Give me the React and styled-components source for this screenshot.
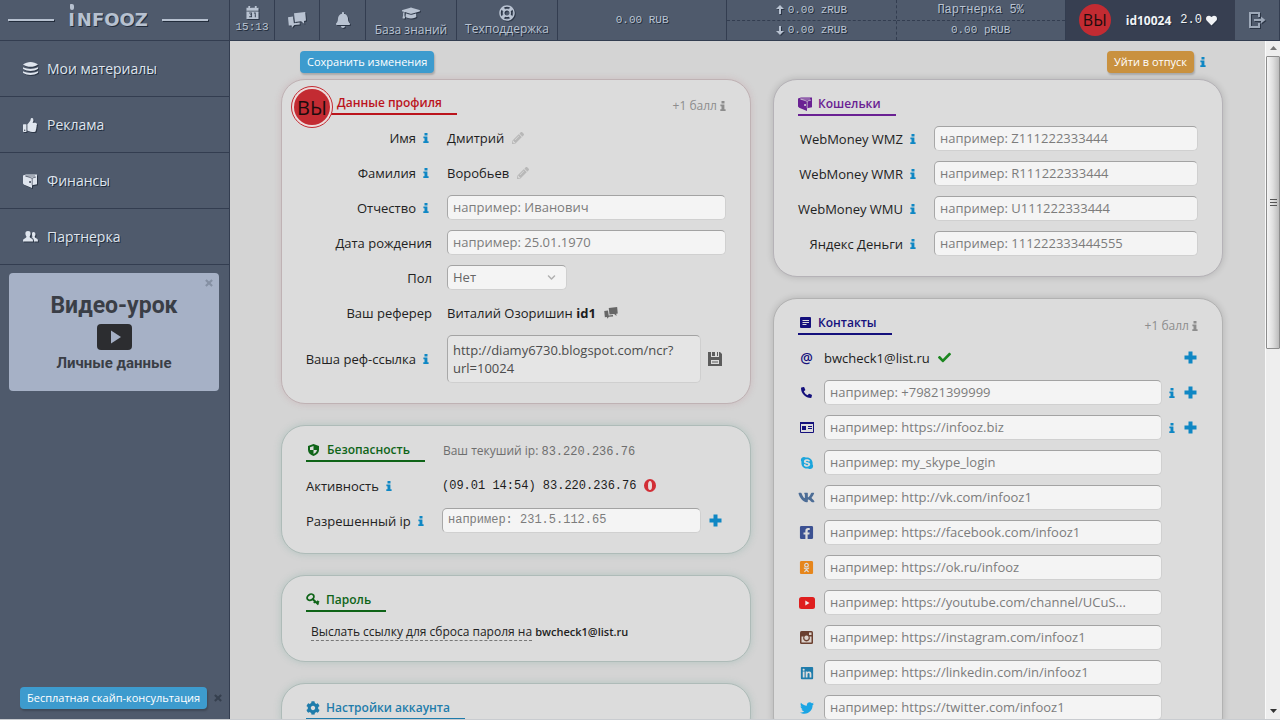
import React from 'react';
import styled, { createGlobalStyle } from 'styled-components';
import {
  FaThumbsUp, FaBell, FaGraduationCap, FaRegLifeRing, FaHeart, FaCheck,
  FaCog, FaVk, FaFacebookSquare, FaOdnoklassnikiSquare, FaLinkedin, FaTwitter,
  FaPhoneAlt, FaChevronDown, FaPencilAlt, FaSkype,
} from 'react-icons/fa';

const sans = '"Open Sans", "Noto Sans", sans-serif';
const mono = '"Liberation Mono", monospace';

const GlobalStyle = createGlobalStyle`
  * {
    box-sizing: border-box;
  }

  body {
    margin: 0;
    background: #d4d4d4;
    color: #1c1c1c;
    font-family: ${sans};
    font-size: 13px;
  }

  button, input, select, textarea {
    font: inherit;
    margin: 0;
  }

  svg {
    display: block;
    flex: none;
  }
`;

const Page = styled.div`
  display: flex;
  flex-direction: column;
  height: 100vh;
  overflow: hidden;
  border-bottom: 1px solid #c9ccd0;
`;

const Header = styled.header`
  display: flex;
  height: 41px;
  flex: none;
  background: #4f5a6c;
  border-bottom: 1px solid #333d50;
  color: #b9c3d2;
  text-shadow: 1px 1px 0 #222c3b;

  svg {
    filter: drop-shadow(1px 1px 0 #2b3545);
  }
`;

const Logo = styled.a`
  display: flex;
  align-items: center;
  justify-content: space-between;
  width: 230px;
  flex: none;
  padding: 0 21px 0 8px;
  border-right: 1px solid #333d50;
  color: #b7c1d0;
  font: bold 18px/24px "DejaVu Sans", sans-serif;
  text-decoration: none;
`;

const LogoLine = styled.span`
  width: 46px;
  height: 2px;
  background: #b7c1d0;
  box-shadow: 1px 1px 0 #222c3b;
`;

const LogoName = styled.span`
  display: flex;
  gap: 2px;
`;

const LogoLetter = styled.span`
  position: relative;

  &::before {
    content: '';
    position: absolute;
    left: 2px;
    top: -4px;
    width: 4px;
    height: 6px;
    border-radius: 1px 3px 3px 3px;
    background: #b7c1d0;
  }
`;

const HeaderButton = styled.button`
  display: flex;
  flex-direction: column;
  align-items: center;
  justify-content: center;
  gap: ${p => p.$gap || 0}px;
  width: ${p => p.$width}px;
  flex: none;
  padding: 0;
  border: 0;
  border-right: 1px solid #333d50;
  background: none;
  color: inherit;
  text-shadow: inherit;
  font-size: 12px;
  line-height: 14px;
  white-space: nowrap;
`;

const MonoText = styled.span`
  font-family: ${mono};
  font-size: ${p => p.$size || 12}px;
`;

const Balances = styled.div`
  display: grid;
  grid-template-columns: repeat(4, minmax(0, 1fr));
  flex: 1;
`;

const Balance = styled.div`
  display: flex;
  flex-direction: column;
  border-right: 1px ${p => (p.$dashed ? 'dashed' : 'solid')} #333d50;
  font: 11px/18px ${mono};
`;

const BalanceLine = styled.div`
  display: flex;
  flex: 1;
  align-items: center;
  justify-content: center;
  gap: 4px;

  & + & {
    border-top: 1px dashed #333d50;
  }
`;

const UserCell = styled.div`
  display: flex;
  align-items: center;
  gap: 15px;
  padding-left: 13px;
  background: #373f51;
  color: #f1f3f6;
  font-size: 12px;
  font-weight: 700;
  white-space: nowrap;
`;

const Score = styled.span`
  display: flex;
  align-items: center;
  gap: 4px;
  margin-left: -6px;
  font: 12px/18px ${mono};
`;

const Avatar = styled.span`
  display: flex;
  align-items: center;
  justify-content: center;
  width: ${p => p.$size}px;
  height: ${p => p.$size}px;
  border-radius: 50%;
  background: #c32b32;
  color: #1c0c0d;
  font-size: ${p => p.$font}px;
  font-weight: 400;
  text-shadow: none;
`;

const Body = styled.div`
  display: flex;
  flex: 1;
  min-height: 0;
`;

const Sidebar = styled.aside`
  display: flex;
  flex-direction: column;
  width: 230px;
  flex: none;
  background: #4f5a6c;
  border-right: 1px solid #333d50;
`;

const MenuLink = styled.a`
  display: grid;
  grid-template-columns: 15px 1fr;
  align-items: center;
  gap: 9px;
  height: 56px;
  padding: 0 23px;
  border-bottom: 1px solid #333d50;
  color: #dfe5ee;
  font-size: 14px;
  text-decoration: none;
  text-shadow: 1px 1px 0 #222c3b;

  svg {
    filter: drop-shadow(1px 1px 0 #2b3545);
  }
`;

const Promo = styled.section`
  position: relative;
  display: flex;
  flex-direction: column;
  align-items: center;
  margin: 8px 10px 0 9px;
  padding: 18px 0 19px;
  border-radius: 4px;
  background: #a6b1c6;
  color: #3a3e46;
  font-family: Roboto, sans-serif;
  font-weight: 700;
`;

const PromoTitle = styled.h2`
  margin: 0 0 4px;
  font-size: 23px;
  line-height: 29px;
`;

const PromoText = styled.p`
  margin: 4px 0 0;
  font-size: 15px;
  line-height: 18px;
`;

const CloseButton = styled.button`
  padding: 0;
  border: 0;
  background: none;
  color: inherit;
`;

const PromoClose = styled(CloseButton)`
  position: absolute;
  top: 6px;
  right: 6px;
  color: #8590a3;
`;

const Consult = styled.div`
  display: flex;
  align-items: center;
  gap: 7px;
  margin: auto 0 10px 20px;
  color: #36404f;
`;

const ActionButton = styled.button`
  height: 22px;
  padding: 0 7px;
  border: 0;
  border-radius: 4px;
  background: ${p => p.$color};
  box-shadow: 1px 2px 2px rgba(0, 0, 0, 0.2);
  color: #fff;
  font-size: 11px;
  font-weight: 500;
  line-height: 20px;
  white-space: nowrap;
`;

const Main = styled.main`
  flex: 1;
  min-width: 0;
  overflow: hidden;
  padding: 10px 42px 0 51px;
`;

const Toolbar = styled.div`
  display: flex;
  align-items: center;
  justify-content: space-between;
  height: 22px;
  margin-bottom: 6px;
  padding: 0 17px 0 19px;
`;

const Inline = styled.span`
  display: flex;
  align-items: center;
  gap: ${p => p.$gap || 8}px;
`;

const Columns = styled.div`
  display: grid;
  grid-template-columns: 47fr 45fr;
  gap: 22px;
  align-items: start;
`;

const Column = styled.div`
  display: flex;
  flex-direction: column;
  gap: 21px;
  min-width: 0;
`;

const Card = styled.section`
  position: relative;
  padding: ${p => p.$top || 13}px 24px 15px;
  border: 1px solid ${p => p.$edge};
  border-radius: 24px;
  background: #dcdcdc;
  box-shadow: 0 0 6px 1px ${p => p.$glow};
`;

const CardHead = styled.div`
  display: flex;
  align-items: flex-start;
  height: 28px;
  margin-bottom: ${p => p.$space || 0}px;
`;

const CardTitle = styled.h3`
  display: flex;
  align-items: center;
  gap: 6px;
  height: 23px;
  margin: 0 0 0 ${p => p.$shift || 0}px;
  padding: 0 15px 0 ${p => (p.$shift ? 6 : 0)}px;
  border-bottom: 2px solid ${p => p.$color};
  color: ${p => p.$color};
  font-size: 12px;
  font-weight: 600;
  white-space: nowrap;
`;

const Bonus = styled.span`
  display: flex;
  align-items: center;
  gap: 3px;
  margin-left: auto;
  padding-top: 5px;
  color: #8d8d8d;
  font-size: 12px;
`;

const AvatarRing = styled.button`
  position: absolute;
  left: 9px;
  top: 6px;
  padding: 2px;
  border: 1px solid #c32b32;
  border-radius: 50%;
  background: #ecdcdc;
`;

const Row = styled.div`
  display: grid;
  grid-template-columns: ${p => p.$columns};
  align-items: center;
  min-height: ${p => p.$height || 35}px;
`;

const Label = styled.label`
  display: flex;
  align-items: center;
  justify-content: ${p => (p.$left ? 'flex-start' : 'flex-end')};
  gap: 7px;
  color: #222;
  white-space: nowrap;

  svg {
    margin-right: ${p => p.$tail || 0}px;
  }
`;

const Value = styled.div`
  display: flex;
  align-items: center;
  gap: ${p => p.$gap || 8}px;
  min-width: 0;
  padding-left: ${p => p.$indent || 15}px;
`;

const Input = styled.input`
  width: 100%;
  min-width: 0;
  height: 25px;
  padding: 0 5px 1px;
  border: 1px solid #d0d0d0;
  border-top-color: #a3a3a3;
  border-left-color: #a8a8a8;
  border-radius: 5px;
  background: #f4f4f4;
  font-family: ${p => (p.$mono ? mono : sans)};
  font-size: ${p => (p.$mono ? 12 : 13)}px;
  color: #555;
  text-overflow: ellipsis;

  &::placeholder {
    color: #7c7c7c;
    opacity: 1;
  }
`;

const RefLink = styled.textarea`
  display: block;
  width: 100%;
  height: 48px;
  padding: 5px;
  border: 1px solid #cfcfcf;
  border-top-color: #a3a3a3;
  border-left-color: #a8a8a8;
  border-radius: 5px;
  background: #e5e5e5;
  color: #4c4c4c;
  line-height: 18px;
  resize: none;
  overflow: hidden;
`;

const SelectBox = styled.span`
  position: relative;
  width: 120px;

  svg {
    position: absolute;
    right: 11px;
    top: 8px;
    color: #b0b0b0;
    pointer-events: none;
  }
`;

const Select = styled.select`
  display: block;
  width: 100%;
  height: 25px;
  padding: 0 5px 1px;
  border: 1px solid #d0d0d0;
  border-top-color: #a3a3a3;
  border-left-color: #a8a8a8;
  border-radius: 5px;
  background: #f4f4f4;
  color: #666;
  appearance: none;
`;

const IconButton = styled.button`
  display: flex;
  padding: 0;
  border: 0;
  background: none;
  color: ${p => p.$color || '#0f87c4'};
`;

const PlusCell = styled.span`
  display: flex;
  align-items: center;
  justify-content: flex-end;
  gap: 9px;
  padding-right: ${p => p.$tail || 1}px;
`;

const IpNote = styled.span`
  margin-left: 18px;
  padding-top: 3px;
  color: #6e6e6e;
  font-size: 12px;
  white-space: nowrap;
`;

const ResetLine = styled.p`
  margin: 0 5px 5px;
  color: #222;
  font-size: 12px;
  line-height: 18px;

  a {
    border-bottom: 1px dashed #777;
    color: inherit;
    text-decoration: none;
  }

  b {
    font-size: 11px;
    font-weight: 600;
  }
`;

const AtIcon = styled.span`
  font-size: 14px;
  font-weight: 600;
  line-height: 16px;
`;

const SocialIcon = styled.span`
  display: flex;
  align-items: center;
  justify-content: center;
  width: 17px;
  color: ${p => p.$color};
`;

const ScrollTrack = styled.div`
  display: flex;
  flex-direction: column;
  align-items: center;
  width: 15px;
  flex: none;
  border-left: 1px solid #fafafa;
  background: #eee;
`;

const ScrollArrow = styled.svg.attrs({ width: 7, height: 4, viewBox: '0 0 7 4' })`
  margin: 5px 0 6px;
`;

const ScrollThumb = styled.div`
  display: flex;
  align-items: center;
  justify-content: center;
  width: 14px;
  height: 293px;
  border: 1px solid #8d8d8d;
  border-radius: 1px;
  background: linear-gradient(90deg, #f5f5f5, #dedede 50%, #bcbcbc);
`;

const ScrollEnd = styled.div`
  margin-top: auto;
`;

const InfoIcon = ({ color = '#0f87c4' }) => (
  <svg width="6" height="10" viewBox="0 0 6 10" fill={color}>
    <path d="M1.5 0h3v2.4h-3zM.4 3.5h4v4.8h1.2V10H.3V8.3h1.2V5.2H.4z" />
  </svg>
);

const CrossIcon = () => (
  <svg width="8" height="8" viewBox="0 0 9 9" stroke="currentColor" strokeWidth="2.4">
    <path d="M1 1l7 7M8 1 1 8" />
  </svg>
);

const CalendarIcon = () => (
  <svg width="13" height="13" viewBox="0 0 13 14" fill="currentColor">
    <path fillRule="evenodd" d="M0 2h2V0h2v2h5V0h2v2h2v3H0zM0 6h13v8H0zM3 7v1h2v1H4v1h1v1H3v1h3V7zm5 0v1h1v4h1V7z" />
  </svg>
);

const ChatIcon = ({ width = 18, height = 16 }) => (
  <svg width={width} height={height} viewBox="0 0 18 16" fill="currentColor">
    <path d="M6 1.2 17.2 0 18 8.6l-2 .3.3 3-3.2-2.6L7 10z" />
    <path d="M0 5.2 5 4.6l.9 6.6 5.7-.6.2 1.9-5.5.6-2.4 2.7-.2-2.4-2.9.2z" />
  </svg>
);

const StackIcon = () => (
  <svg width="15" height="13" viewBox="0 0 15 13" fill="currentColor">
    <path d="M0 2.5C2 1 5 0 7.5 0S13 1 15 2.5C13 4 10 4.8 7.5 4.8S2 4 0 2.5z" />
    <path d="M0 5.3c2.5 1.3 5 1.7 7.5 1.7s5-.4 7.5-1.7v1.4C13 8.2 10 8.900 7.500 8.900S2 8.200 0 6.700z" />
    <path d="M0 9.300C2.500 10.600 5 11 7.500 11s5-.4 7.500-1.700v1.400c-2 1.500-5 2.200-7.500 2.200S2 12.200 0 10.700z" />
  </svg>
);

const WalletIcon = ({ size = 14, slot = '#3b4355' }) => (
  <svg width={size} height={size} viewBox="0 0 14 14" fill="currentColor">
    <path d="M0 1.500 3 .5H14v9.700L9 11.200V14L1.200 10.800 0 9.500z" />
    <path d="M2.500 2h9.500M9.300 4 13 3M9.200 4v7.200M2.500 2 9 4.200" stroke={slot} strokeWidth=".7" fill="none" />
    <path d="M6.300 7h1.500v2H6.300z" fill={slot} />
  </svg>
);

const UsersIcon = () => (
  <svg width="15" height="11" viewBox="0 0 15 11" fill="currentColor">
    <path d="M5 0c2 0 2.800 1.300 2.600 3-.1 1.300-.7 2-.9 2.600 0 1 .4 1.300 1.700 1.800C10 8 10 9 10 10.500H0C0 8.700.2 8 1.800 7.400c1.200-.5 1.600-.8 1.600-1.800-.3-.6-.9-1.300-1-2.600C2.200 1.300 3 0 5 0z" />
    <path d="M10.300 1c1.600 0 2.300 1 2.200 2.400-.1 1-.5 1.700-.8 2.200 0 .9.300 1.200 1.400 1.700 1.500.6 1.900 1.300 1.900 3.200h-4c0-2-.2-3-1.800-3.800-.2-.2.200-.6.200-1.100-.4-1.500-.9-4.600.9-4.600z" />
  </svg>
);

const ArrowIcon = ({ down }) => (
  <svg width="8" height="9" viewBox="0 0 8 9" fill="currentColor">
    <path d={down ? 'M3 0h2v5h3L4 9 0 5h3z' : 'M3 9h2V4h3L4 0 0 4h3z'} />
  </svg>
);

const ExitIcon = () => (
  <svg width="17" height="16" viewBox="0 0 17 16" fill="none" stroke="#9da8b8" strokeWidth="2">
    <path d="M10 5V1H1v14h9v-4" />
    <path d="M5 8h8" />
    <path d="M12 4.500 16.500 8 12 11.500z" fill="#9da8b8" stroke="none" />
  </svg>
);

const PlayIcon = () => (
  <svg width="35" height="26" viewBox="0 0 35 26">
    <rect width="35" height="26" rx="4" fill="#2c2d30" />
    <path d="M14 6.500v13L24 13z" fill="#a6b1c6" />
  </svg>
);

const PlusIcon = () => (
  <svg width="13" height="13" viewBox="0 0 13 13" fill="currentColor">
    <path d="M4.500.5h4v4h4v4h-4v4h-4v-4h-4v-4h4z" />
  </svg>
);

const FloppyIcon = () => (
  <svg width="14" height="14" viewBox="0 0 14 14" fill="currentColor">
    <path fillRule="evenodd" d="M0 0h3v5h8V0h1l2 2v12H0zM4 0h3v4H4zM9 0h1v4H9zM3 8v4h8V8z" />
    <path d="M4 9.500h6v1H4z" />
  </svg>
);

const ShieldIcon = () => (
  <svg width="15" height="12" viewBox="-2 0 15 12">
    <path d="M5.500 0 11 2v4c0 3-2.500 5-5.500 6C2.500 11 0 9 0 6V2z" fill="currentColor" />
    <path d="M5.500 2v4H9c-.3 2-1.700 3.300-3.500 4V6H2V3.300z" fill="#dcdcdc" />
  </svg>
);

const KeyIcon = () => (
  <svg width="14" height="13" viewBox="0 0 14 13" fill="none" stroke="currentColor">
    <ellipse cx="4.500" cy="4.200" rx="3.600" ry="2.800" strokeWidth="1.800" transform="rotate(-35 4.500 4.200)" />
    <path d="M6.500 6 12.500 11.500M9 8.500 8 10M11 8l2 1.500" strokeWidth="2" />
  </svg>
);

const ListIcon = () => (
  <svg width="14" height="11" viewBox="-2 0 14 11">
    <rect width="11" height="11" rx="1" fill="currentColor" />
    <path d="M2.500 3.500h6.500M2.500 5.500h6.500M2.500 7.500h4" stroke="#dcdcdc" />
  </svg>
);

const CardIcon = () => (
  <svg width="14" height="11" viewBox="0 0 14 11" fill="none" stroke="currentColor">
    <path d="M.5.5h13v10H.5z" />
    <path d="M0 1h14" strokeWidth="2" />
    <path d="M2 4h4v4H2z" fill="currentColor" stroke="none" />
    <path d="M8 4.500h4M8 6.500h4" />
  </svg>
);

const YoutubeIcon = () => (
  <svg width="16" height="12" viewBox="0 0 16 12">
    <rect width="16" height="12" rx="2.500" fill="#df1f1f" />
    <path d="M6.300 3.500v5L10.500 6z" fill="#f3eaea" />
  </svg>
);

const InstagramIcon = () => (
  <svg width="13" height="13" viewBox="0 0 13 13">
    <rect width="13" height="13" rx="1.500" fill="#6b4030" />
    <path d="M1.500 5.500h2a3.400 3.400 0 1 0 6 0h2v6h-10z" fill="#dcd2cb" />
    <circle cx="6.500" cy="6.700" r="2.200" fill="#dcd2cb" />
    <path d="M9 1.500h2.500V4H9z" fill="#dcd2cb" />
  </svg>
);

const OperaIcon = () => (
  <svg width="12" height="13" viewBox="0 0 12 13">
    <ellipse cx="6" cy="6.500" rx="6" ry="6.500" fill="#d22e36" />
    <ellipse cx="6" cy="6.500" rx="2" ry="4.600" fill="#ead9da" />
  </svg>
);

const menu = [
  { icon: <StackIcon />, label: 'Мои материалы' },
  { icon: <FaThumbsUp size={14} />, label: 'Реклама' },
  { icon: <WalletIcon />, label: 'Финансы' },
  { icon: <UsersIcon />, label: 'Партнерка' },
];

const wallets = [
  { id: 'wmz', label: 'WebMoney WMZ', hint: 'например: Z111222333444' },
  { id: 'wmr', label: 'WebMoney WMR', hint: 'например: R111222333444' },
  { id: 'wmu', label: 'WebMoney WMU', hint: 'например: U111222333444' },
  { id: 'yandex', label: 'Яндекс Деньги', hint: 'например: 111222333444555' },
];

const navy = '#14107c';

const contacts = [
  { id: 'phone', icon: <FaPhoneAlt size={11} />, color: navy, hint: 'например: +79821399999', extra: true },
  { id: 'site', icon: <CardIcon />, color: navy, hint: 'например: https://infooz.biz', extra: true },
  { id: 'skype', icon: <FaSkype size={14} />, color: '#1ba5dc', hint: 'например: my_skype_login' },
  { id: 'vk', icon: <FaVk size={17} />, color: '#4d6d96', hint: 'например: http://vk.com/infooz1' },
  { id: 'facebook', icon: <FaFacebookSquare size={15} />, color: '#3c5192', hint: 'например: https://facebook.com/infooz1' },
  { id: 'ok', icon: <FaOdnoklassnikiSquare size={15} />, color: '#e6861c', hint: 'например: https://ok.ru/infooz' },
  { id: 'youtube', icon: <YoutubeIcon />, color: '#df1f1f', hint: 'например: https://youtube.com/channel/UCuS...' },
  { id: 'instagram', icon: <InstagramIcon />, color: '#6b4030', hint: 'например: https://instagram.com/infooz1' },
  { id: 'linkedin', icon: <FaLinkedin size={14} />, color: '#1f7cab', hint: 'например: https://linkedin.com/in/infooz1' },
  { id: 'twitter', icon: <FaTwitter size={14} />, color: '#1ba5e4', hint: 'например: https://twitter.com/infooz1' },
];

const profileColumns = '126px minmax(0, 1fr)';
const contactColumns = '26px minmax(0, 1fr) 36px';

const TopBar = () => (
  <Header>
    <Logo href="#">
      <LogoLine />
      <LogoName>
        <LogoLetter>I</LogoLetter>
        <span>NFOOZ</span>
      </LogoName>
      <LogoLine />
    </Logo>
    <HeaderButton $width={45} $gap={1}>
      <CalendarIcon />
      <MonoText $size={11}>15:13</MonoText>
    </HeaderButton>
    <HeaderButton $width={45} aria-label="Сообщения"><ChatIcon /></HeaderButton>
    <HeaderButton $width={46} aria-label="Уведомления"><FaBell size={16} /></HeaderButton>
    <HeaderButton $width={91} $gap={1}>
      <FaGraduationCap size={18} />
      База знаний
    </HeaderButton>
    <HeaderButton $width={101} $gap={1}>
      <FaRegLifeRing size={16} />
      Техподдержка
    </HeaderButton>
    <Balances>
      <Balance><BalanceLine>0.00 RUB</BalanceLine></Balance>
      <Balance $dashed>
        <BalanceLine>
          <ArrowIcon />
          0.00 zRUB
        </BalanceLine>
        <BalanceLine>
          <ArrowIcon down />
          0.00 zRUB
        </BalanceLine>
      </Balance>
      <Balance>
        <BalanceLine><MonoText>Партнерка 5%</MonoText></BalanceLine>
        <BalanceLine>0.00 pRUB</BalanceLine>
      </Balance>
      <UserCell>
        <Avatar $size={32} $font={16}>ВЫ</Avatar>
        <span>id10024</span>
        <Score>
          2.0
          <FaHeart size={11} />
        </Score>
      </UserCell>
    </Balances>
    <HeaderButton $width={45} aria-label="Выход"><ExitIcon /></HeaderButton>
  </Header>
);

const SideMenu = () => (
  <Sidebar>
    <nav>
      {menu.map(item => (
        <MenuLink href="#" key={item.label}>
          {item.icon}
          {item.label}
        </MenuLink>
      ))}
    </nav>
    <Promo>
      <PromoClose aria-label="Закрыть"><CrossIcon /></PromoClose>
      <PromoTitle>Видео-урок</PromoTitle>
      <PlayIcon />
      <PromoText>Личные данные</PromoText>
    </Promo>
    <Consult>
      <ActionButton $color="#3d9bce">Бесплатная скайп-консультация</ActionButton>
      <CloseButton aria-label="Закрыть"><CrossIcon /></CloseButton>
    </Consult>
  </Sidebar>
);

const ProfileCard = () => (
  <Card $top={12} $edge="#bfb2b4" $glow="rgba(180, 120, 130, 0.2)">
    <AvatarRing aria-label="Аватар"><Avatar $size={36} $font={20}>ВЫ</Avatar></AvatarRing>
    <CardHead>
      <CardTitle $color="#bb141c" $shift={25}>Данные профиля</CardTitle>
      <Bonus>
        +1 балл
        <InfoIcon color="#8d8d8d" />
      </Bonus>
    </CardHead>
    <Row $columns={profileColumns}>
      <Label $tail={3}>
        Имя
        <InfoIcon />
      </Label>
      <Value>
        Дмитрий
        <IconButton $color="#b8b8b8" aria-label="Изменить имя"><FaPencilAlt size={12} /></IconButton>
      </Value>
    </Row>
    <Row $columns={profileColumns}>
      <Label $tail={3}>
        Фамилия
        <InfoIcon />
      </Label>
      <Value>
        Воробьев
        <IconButton $color="#b8b8b8" aria-label="Изменить фамилию"><FaPencilAlt size={12} /></IconButton>
      </Value>
    </Row>
    <Row $columns={profileColumns}>
      <Label htmlFor="patronymic" $tail={3}>
        Отчество
        <InfoIcon />
      </Label>
      <Value><Input id="patronymic" placeholder="например: Иванович" /></Value>
    </Row>
    <Row $columns={profileColumns}>
      <Label htmlFor="birthday">Дата рождения</Label>
      <Value><Input id="birthday" placeholder="например: 25.01.1970" /></Value>
    </Row>
    <Row $columns={profileColumns}>
      <Label htmlFor="gender">Пол</Label>
      <Value>
        <SelectBox>
          <Select id="gender" defaultValue="none">
            <option value="none">Нет</option>
            <option value="m">Мужской</option>
            <option value="f">Женский</option>
          </Select>
          <FaChevronDown size={9} />
        </SelectBox>
      </Value>
    </Row>
    <Row $columns={profileColumns}>
      <Label>Ваш реферер</Label>
      <Value>
        <span>
          Виталий Озоришин
          {' '}
          <b>id1</b>
        </span>
        <IconButton $color="#666" aria-label="Написать"><ChatIcon width={14} height={12} /></IconButton>
      </Value>
    </Row>
    <Row $columns={profileColumns} $height={58}>
      <Label htmlFor="reflink" $tail={3}>
        Ваша реф-ссылка
        <InfoIcon />
      </Label>
      <Row $columns="minmax(0, 1fr) 25px" $height={48}>
        <Value>
          <RefLink id="reflink" readOnly defaultValue="http://diamy6730.blogspot.com/ncr?url=10024" />
        </Value>
        <PlusCell $tail={4}>
          <IconButton $color="#5c5c5c" aria-label="Сохранить"><FloppyIcon /></IconButton>
        </PlusCell>
      </Row>
    </Row>
  </Card>
);

const SecurityCard = () => (
  <Card $edge="#aebbb8" $glow="rgba(110, 165, 150, 0.25)">
    <CardHead $space={1}>
      <CardTitle $color="#0f6418">
        <ShieldIcon />
        Безопасность
      </CardTitle>
      <IpNote>
        Ваш текуший ip:
        {' '}
        <MonoText>83.220.236.76</MonoText>
      </IpNote>
    </CardHead>
    <Row $columns="136px minmax(0, 1fr)">
      <Label $left>
        Активность
        <InfoIcon />
      </Label>
      <Inline>
        <MonoText>(09.01 14:54) 83.220.236.76</MonoText>
        <OperaIcon />
      </Inline>
    </Row>
    <Row $columns="136px minmax(0, 1fr) 25px">
      <Label $left htmlFor="ip">
        Разрешенный ip
        <InfoIcon />
      </Label>
      <Input $mono id="ip" placeholder="например: 231.5.112.65" />
      <PlusCell $tail={4}><IconButton aria-label="Добавить ip"><PlusIcon /></IconButton></PlusCell>
    </Row>
  </Card>
);

const PasswordCard = () => (
  <Card $edge="#aebbb8" $glow="rgba(110, 165, 150, 0.25)">
    <CardHead $space={6}>
      <CardTitle $color="#0f6418">
        <KeyIcon />
        Пароль
      </CardTitle>
    </CardHead>
    <ResetLine>
      <a href="#">Выслать ссылку для сброса пароля на</a>
      {' '}
      <b>bwcheck1@list.ru</b>
    </ResetLine>
  </Card>
);

const SettingsCard = () => (
  <Card $edge="#aebbb8" $glow="rgba(110, 165, 150, 0.25)">
    <CardHead>
      <CardTitle $color="#1f7cab">
        <FaCog size={14} />
        Настройки аккаунта
      </CardTitle>
    </CardHead>
  </Card>
);

const WalletsCard = () => (
  <Card $edge="#b5b2b7" $glow="rgba(0, 0, 0, 0.13)">
    <CardHead>
      <CardTitle $color="#6a2193">
        <WalletIcon slot="#dcdcdc" />
        Кошельки
      </CardTitle>
    </CardHead>
    {wallets.map(wallet => (
      <Row $columns="118px minmax(0, 1fr)" key={wallet.id}>
        <Label htmlFor={wallet.id}>
          {wallet.label}
          <InfoIcon />
        </Label>
        <Value $indent={18}><Input id={wallet.id} placeholder={wallet.hint} /></Value>
      </Row>
    ))}
  </Card>
);

const ContactsCard = () => (
  <Card $edge="#b2b2b2" $glow="rgba(0, 0, 0, 0.13)">
    <CardHead>
      <CardTitle $color={navy}>
        <ListIcon />
        Контакты
      </CardTitle>
      <Bonus>
        +1 балл
        <InfoIcon color="#8d8d8d" />
      </Bonus>
    </CardHead>
    <Row $columns={contactColumns}>
      <SocialIcon $color={navy}><AtIcon>@</AtIcon></SocialIcon>
      <Inline>
        bwcheck1@list.ru
        <FaCheck size={13} color="#1b861f" />
      </Inline>
      <PlusCell><IconButton aria-label="Добавить"><PlusIcon /></IconButton></PlusCell>
    </Row>
    {contacts.map(item => (
      <Row $columns={contactColumns} key={item.id}>
        <SocialIcon $color={item.color}>{item.icon}</SocialIcon>
        <Input aria-label={item.id} placeholder={item.hint} />
        {item.extra && (
          <PlusCell>
            <InfoIcon />
            <IconButton aria-label="Добавить"><PlusIcon /></IconButton>
          </PlusCell>
        )}
      </Row>
    ))}
  </Card>
);

const ScrollBar = () => (
  <ScrollTrack>
    <ScrollArrow><path d="M0 4 3.500 0 7 4z" fill="#777" /></ScrollArrow>
    <ScrollThumb>
      <svg width="7" height="8" viewBox="0 0 7 8" stroke="#555">
        <path d="M0 .5h7M0 3.500h7M0 6.500h7" />
      </svg>
    </ScrollThumb>
    <ScrollEnd><ScrollArrow><path d="M0 0 3.500 4 7 0z" fill="#333" /></ScrollArrow></ScrollEnd>
  </ScrollTrack>
);

const App = () => (
  <Page>
    <GlobalStyle />
    <TopBar />
    <Body>
      <SideMenu />
      <Main>
        <Toolbar>
          <ActionButton $color="#3d9bce">Сохранить изменения</ActionButton>
          <Inline $gap={6}>
            <ActionButton $color="#c9913f">Уйти в отпуск</ActionButton>
            <InfoIcon />
          </Inline>
        </Toolbar>
        <Columns>
          <Column>
            <ProfileCard />
            <SecurityCard />
            <PasswordCard />
            <SettingsCard />
          </Column>
          <Column>
            <WalletsCard />
            <ContactsCard />
          </Column>
        </Columns>
      </Main>
      <ScrollBar />
    </Body>
  </Page>
);

export default App;
